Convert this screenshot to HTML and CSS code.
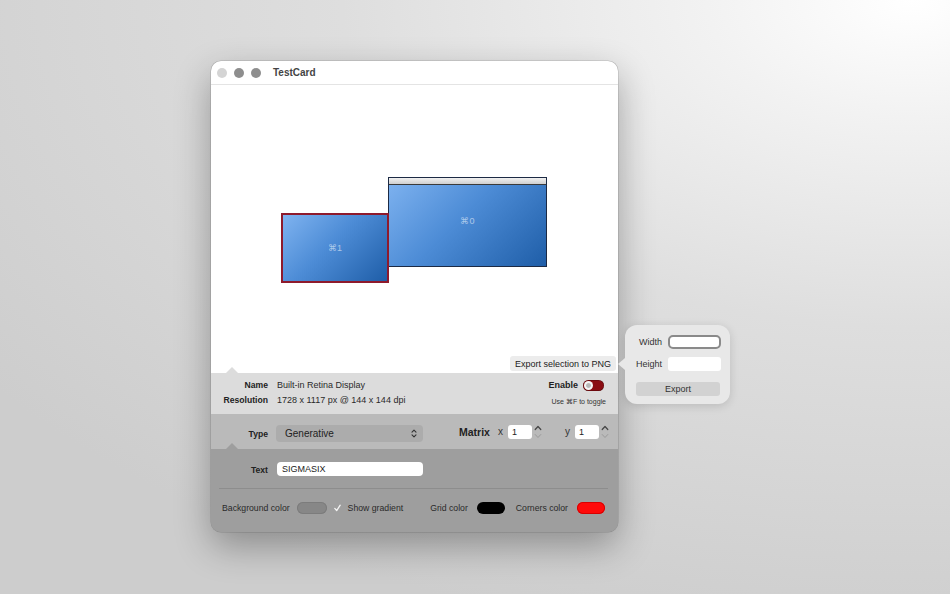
FILE: index.html
```
<!DOCTYPE html>
<html>
<head>
<meta charset="utf-8">
<title>TestCard</title>
<link rel="stylesheet" href="styles.css">
</head>
<body>
<div class="stage">
  <div class="window">
    <div class="titlebar">
      <span class="light light-off"></span>
      <span class="light"></span>
      <span class="light"></span>
      <span class="title">TestCard</span>
    </div>
    <div class="canvas">
      <div class="display display-main">
        <div class="menubar"></div>
        <div class="display-body"><span class="display-label">⌘0</span></div>
      </div>
      <div class="display display-second">
        <div class="display-body"><span class="display-label">⌘1</span></div>
      </div>
      <button class="export-sel">Export selection to PNG</button>
    </div>
    <div class="info">
      <div class="info-grid">
        <span class="lbl">Name</span><span class="val">Built-in Retina Display</span>
        <span class="lbl">Resolution</span><span class="val">1728 x 1117 px @ 144 x 144 dpi</span>
      </div>
      <div class="enable">
        <div class="enable-row">
          <span class="lbl">Enable</span>
          <span class="toggle"><span class="knob"></span></span>
        </div>
        <div class="hint">Use ⌘F to toggle</div>
      </div>
    </div>
    <div class="typerow">
      <span class="lbl type-lbl">Type</span>
      <div class="select">
        <span>Generative</span>
        <svg class="updown" width="6" height="9" viewBox="0 0 6 9"><path d="M1 3.2 L3 1.2 L5 3.2 M1 5.8 L3 7.8 L5 5.8" fill="none" stroke="#333" stroke-width="1.1" stroke-linecap="round" stroke-linejoin="round"/></svg>
      </div>
      <span class="lbl matrix-lbl">Matrix</span>
      <span class="axis">x</span>
      <span class="num">1</span>
      <svg class="stepper" width="8" height="16" viewBox="0 0 8 16"><path d="M1.2 5.5 L4 2.5 L6.8 5.5" fill="none" stroke="#444" stroke-width="1.2" stroke-linecap="round" stroke-linejoin="round"/><path d="M1.2 10.5 L4 13.5 L6.8 10.5" fill="none" stroke="#9a9a9a" stroke-width="1" stroke-linecap="round" stroke-linejoin="round"/></svg>
      <span class="axis axis-y">y</span>
      <span class="num">1</span>
      <svg class="stepper" width="8" height="16" viewBox="0 0 8 16"><path d="M1.2 5.5 L4 2.5 L6.8 5.5" fill="none" stroke="#444" stroke-width="1.2" stroke-linecap="round" stroke-linejoin="round"/><path d="M1.2 10.5 L4 13.5 L6.8 10.5" fill="none" stroke="#9a9a9a" stroke-width="1" stroke-linecap="round" stroke-linejoin="round"/></svg>
    </div>
    <div class="settings">
      <div class="text-row">
        <span class="lbl text-lbl">Text</span>
        <span class="text-field">SIGMASIX</span>
      </div>
      <div class="sep"></div>
      <div class="colors">
        <div class="group">
          <span>Background color</span>
          <span class="swatch swatch-gray"></span>
          <svg class="check" width="7" height="8" viewBox="0 0 7 8"><path d="M0.8 4.4 L2.7 6.6 L6.2 1.2" fill="none" stroke="#f4f4f4" stroke-width="1.3" stroke-linecap="round" stroke-linejoin="round"/></svg>
          <span>Show gradient</span>
        </div>
        <div class="group group-right">
          <span>Grid color</span>
          <span class="swatch swatch-black"></span>
          <span class="corners">Corners color</span>
          <span class="swatch swatch-red"></span>
        </div>
      </div>
    </div>
    <div class="popover">
      <div class="pop-grid">
        <span class="pop-lbl">Width</span><span class="pop-field pop-focus"></span>
        <span class="pop-lbl">Height</span><span class="pop-field"></span>
      </div>
      <button class="pop-export">Export</button>
    </div>
  </div>
</div>
</body>
</html>
```
FILE: styles.css
```
* { box-sizing: border-box; }
html, body {
  margin: 0;
  width: 950px;
  height: 594px;
  overflow: hidden;
}
body {
  font-family: "Liberation Sans", Arial, sans-serif;
  color: #222;
  background: radial-gradient(ellipse 120% 110% at 96% 0%, #ffffff 0%, #f2f2f2 18%, #dedede 50%, #cdcdcd 100%);
}
.stage {
  width: 950px;
  height: 594px;
  padding: 61px 0 0 211px;
}
.window {
  position: relative;
  width: 407px;
  height: 471px;
  border-radius: 10px;
  background: #9e9e9e;
  box-shadow: 0 14px 36px rgba(0,0,0,0.32), 0 0 0 0.5px rgba(0,0,0,0.18);
  display: flex;
  flex-direction: column;
}
.titlebar {
  height: 24px;
  background: #fff;
  border-radius: 10px 10px 0 0;
  border-bottom: 1px solid #e4e4e4;
  display: flex;
  align-items: center;
  padding-left: 6px;
  gap: 7px;
}
.light {
  width: 10px;
  height: 10px;
  border-radius: 50%;
  background: #8e8e8e;
}
.light-off { background: #d4d4d4; }
.title {
  margin-left: 5px;
  font-size: 10px;
  font-weight: bold;
  color: #444;
}
.canvas {
  position: relative;
  height: 288px;
  background: #fff;
  display: flex;
  justify-content: flex-end;
  align-items: flex-end;
  padding: 0 2px 2px 0;
}
.display {
  position: absolute;
  display: flex;
  flex-direction: column;
  background: linear-gradient(135deg, #7fb3f0 0%, #4d8cd6 45%, #1f5ea8 100%);
}
.display-main {
  left: 177px;
  top: 92px;
  width: 159px;
  height: 90px;
  border: 1px solid #1c2a44;
}
.menubar {
  height: 7px;
  background: linear-gradient(#f0f0f0, #cfcfcf);
  border-bottom: 1px solid #3a3a3a;
}
.display-main .display-body { padding-bottom: 9px; }
.display-second {
  left: 70px;
  top: 128px;
  width: 108px;
  height: 70px;
  border: 2px solid #8e1a2c;
  z-index: 1;
}
.display-body {
  flex: 1;
  display: flex;
  align-items: center;
  justify-content: center;
}
.display-label {
  font-size: 9px;
  color: rgba(255,255,255,0.55);
}
.export-sel {
  height: 15px;
  padding: 0 5px;
  border: none;
  border-radius: 3px;
  background: #ececec;
  font-family: inherit;
  font-size: 9px;
  color: #222;
}
.lbl {
  font-weight: bold;
  color: #222;
}
.info {
  position: relative;
  height: 41px;
  background: #dcdcdc;
  display: flex;
  justify-content: space-between;
  padding: 5px 12px 0 0;
  font-size: 9px;
}
.info::before {
  content: "";
  position: absolute;
  left: 15px;
  top: -6px;
  border-left: 6px solid transparent;
  border-right: 6px solid transparent;
  border-bottom: 6px solid #dcdcdc;
}
.info-grid {
  display: grid;
  grid-template-columns: 57px auto;
  grid-auto-rows: 15px;
  column-gap: 9px;
  line-height: 15px;
  align-items: center;
}
.info-grid .lbl { text-align: right; font-size: 8.6px; }
.val { color: #2a2a2a; }
.enable {
  display: flex;
  flex-direction: column;
  align-items: flex-end;
  line-height: 15px;
}
.enable-row {
  display: flex;
  align-items: center;
  height: 15px;
  gap: 5px;
  padding-right: 2px;
}
.toggle {
  width: 21px;
  height: 11px;
  border-radius: 6px;
  background: #8a0c12;
  position: relative;
  box-shadow: inset 0 0 0 0.5px rgba(0,0,0,0.4);
}
.knob {
  position: absolute;
  left: 1px;
  top: 1px;
  width: 9px;
  height: 9px;
  border-radius: 50%;
  background: radial-gradient(circle at 50% 50%, #b8b8b8 0%, #b8b8b8 30%, #f4f4f4 45%, #ffffff 100%);
}
.hint {
  font-size: 7px;
  line-height: 17px;
  color: #333;
}
.typerow {
  position: relative;
  height: 35px;
  background: #bababa;
  display: flex;
  align-items: center;
  font-size: 10px;
}
.typerow::after {
  content: "";
  position: absolute;
  left: 15px;
  bottom: 0;
  border-left: 6px solid transparent;
  border-right: 6px solid transparent;
  border-bottom: 6px solid #9e9e9e;
}
.type-lbl {
  width: 57px;
  text-align: right;
  font-size: 8.6px;
  margin-right: 8px;
  margin-top: 4px;
}
.select {
  width: 147px;
  height: 17px;
  border-radius: 4px;
  background: #acacac;
  display: flex;
  align-items: center;
  justify-content: space-between;
  padding: 0 6px 0 9px;
  margin-top: 3px;
  color: #222;
}
.matrix-lbl {
  font-size: 10.5px;
  margin-left: 36px;
}
.axis {
  margin-left: 8px;
  margin-right: 5px;
  color: #333;
}
.axis-y { margin-left: 23px; }
.num {
  width: 24px;
  height: 14px;
  background: #fff;
  border-radius: 3px;
  font-size: 9px;
  line-height: 14px;
  padding-left: 4px;
  color: #222;
}
.stepper { margin-left: 2px; }
.settings {
  flex: 1;
  background: #9e9e9e;
  border-radius: 0 0 10px 10px;
  padding-top: 13px;
  font-size: 8.7px;
}
.text-row {
  display: flex;
  align-items: center;
  height: 14px;
}
.text-lbl {
  width: 57px;
  text-align: right;
  font-size: 8.6px;
  margin-right: 9px;
  margin-top: 1px;
}
.text-field {
  width: 146px;
  height: 14px;
  background: #fff;
  border-radius: 4px;
  padding-left: 5px;
  line-height: 14px;
  font-size: 9px;
  color: #222;
}
.sep {
  height: 1px;
  background: #8d8d8d;
  margin: 12px 10px 0 8px;
}
.colors {
  display: flex;
  align-items: center;
  justify-content: space-between;
  height: 12px;
  margin-top: 13px;
  padding: 0 13px 0 11px;
  color: #2a2a2a;
}
.group {
  display: flex;
  align-items: center;
  gap: 7px;
}
.check { margin-left: 0; }
.group-right { gap: 9px; }
.corners { margin-left: 2px; }
.swatch {
  width: 28px;
  height: 12px;
  border-radius: 6px;
}
.swatch-gray {
  width: 30px;
  background: #878787;
  box-shadow: inset 0 0 0 1px #7c7c7c;
}
.swatch-black { background: #000; }
.swatch-red {
  background: #ff0a0a;
  box-shadow: inset 0 0 0 1px #d80000;
}
.popover {
  position: absolute;
  left: 414px;
  top: 264px;
  width: 105px;
  height: 79px;
  background: #e8e8e8;
  border-radius: 12px;
  box-shadow: 0 2px 10px rgba(0,0,0,0.14);
  padding: 10px 9px 0 11px;
}
.popover::before {
  content: "";
  position: absolute;
  left: -7px;
  top: 33px;
  border-top: 6px solid transparent;
  border-bottom: 6px solid transparent;
  border-right: 7px solid #e8e8e8;
}
.pop-grid {
  display: grid;
  grid-template-columns: 26px 53px;
  column-gap: 6px;
  row-gap: 8px;
  align-items: center;
}
.pop-lbl {
  font-size: 9px;
  color: #333;
  text-align: right;
}
.pop-field {
  height: 14px;
  background: #fff;
  border-radius: 3px;
}
.pop-focus {
  border: 2px solid #8a8a8a;
  border-radius: 5px;
}
.pop-export {
  display: block;
  width: 84px;
  height: 14px;
  margin-top: 11px;
  border: none;
  border-radius: 3px;
  background: #d2d2d2;
  font-family: inherit;
  font-size: 9px;
  color: #333;
  padding: 0;
}
```
